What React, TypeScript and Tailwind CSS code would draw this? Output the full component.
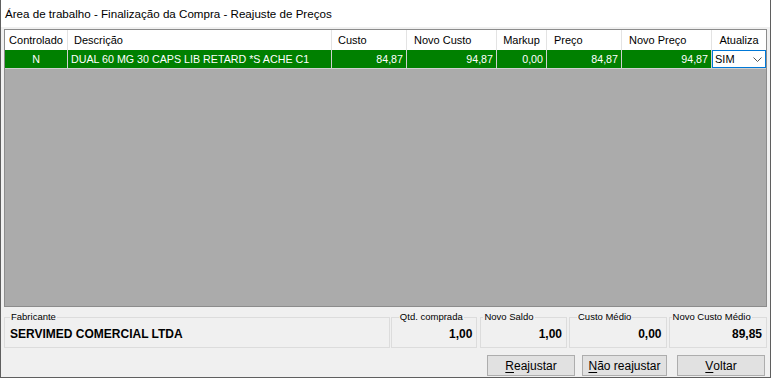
const columns = [
  { label: 'Controlado', w: 'w-[63px]', head: 'justify-center', cell: 'justify-center' },
  { label: 'Descrição', w: 'w-[264px]', head: 'justify-start pl-[6px]', cell: 'justify-start pl-[3px]' },
  { label: 'Custo', w: 'w-[75px]', head: 'justify-start pl-[6px]', cell: 'justify-end pr-[3px]' },
  { label: 'Novo Custo', w: 'w-[90px]', head: 'justify-start pl-[7px]', cell: 'justify-end pr-[3px]' },
  { label: 'Markup', w: 'w-[50px]', head: 'justify-center', cell: 'justify-end pr-[3px]' },
  { label: 'Preço', w: 'w-[75px]', head: 'justify-start pl-[7px]', cell: 'justify-end pr-[3px]' },
  { label: 'Novo Preço', w: 'w-[90px]', head: 'justify-start pl-[7px]', cell: 'justify-end pr-[3px]' },
];

const row = ['N', 'DUAL 60 MG 30 CAPS LIB RETARD *S ACHE C1', '84,87', '94,87', '0,00', '84,87', '94,87'];

const totals = [
  { label: 'Qtd. comprada', value: '1,00', w: 'w-[87px]', pl: 'pl-[7px]' },
  { label: 'Novo Saldo', value: '1,00', w: 'w-[87px]', pl: 'pl-[2px]' },
  { label: 'Custo Médio', value: '0,00', w: 'w-[98px]', pl: 'pl-[7px]' },
  { label: 'Novo Custo Médio', value: '89,85', w: 'w-[99px]', pl: 'pl-[2px]' },
];

function Button({ first, rest, w }: { first: string; rest: string; w: string }) {
  return (
    <button
      className={`${w} h-[21px] bg-[#e1e1e1] border border-[#adadad] text-[12px] text-black flex items-center justify-center`}
    >
      <span className="underline underline-offset-2">{first}</span>
      {rest}
    </button>
  );
}

export default function App() {
  return (
    <div className="w-[771px] h-[378px] flex flex-col bg-[#f0f0f0] border-x border-b border-[#5f5f5f] font-['Liberation_Sans',Arial,sans-serif] text-black overflow-hidden">
      {/* Title bar */}
      <div className="h-[27px] shrink-0 bg-white flex items-center pl-[4px] text-[11.6px]">
        Área de trabalho - Finalização da Compra - Reajuste de Preços
      </div>

      <div className="flex-1 flex flex-col px-[3px] pt-[2px]">
        {/* Grid */}
        <div className="h-[278px] shrink-0 bg-[#ababab] border border-[#8c8c8c] flex flex-col">
          <div className="h-[20px] flex bg-white text-[11px]">
            {columns.map((c) => (
              <div key={c.label} className={`${c.w} flex items-center border-r border-[#e3e3e3] ${c.head}`}>
                {c.label}
              </div>
            ))}
            <div className="flex-1 flex items-center justify-center">Atualiza</div>
          </div>
          <div className="h-[19px] flex bg-[#008000] text-white text-[10.7px] border-b border-[#d0d0d0]">
            {columns.map((c, i) => (
              <div key={c.label} className={`${c.w} flex items-center border-r border-[#d0d0d0] ${c.cell}`}>
                {row[i]}
              </div>
            ))}
            <div className="flex-1 flex items-center justify-between bg-white border border-[#0078d7] text-black text-[11px] pl-[2px] pr-[3px]">
              <span>SIM</span>
              <svg width="9" height="5" viewBox="0 0 9 5" fill="none" stroke="#555" strokeWidth="1">
                <path d="M0.5 0.5 L4.5 4.5 L8.5 0.5" />
              </svg>
            </div>
          </div>
        </div>

        {/* Totals */}
        <div className="flex items-start mt-[5px] h-[36px] shrink-0">
          <fieldset className="w-[388px] h-[36px] border border-[#dcdcdc] pl-[5px] mr-[1px]">
            <legend className="text-[9.5px] leading-[10px] px-[1px]">Fabricante</legend>
            <div className="text-[12px] font-bold pt-[3px]">SERVIMED COMERCIAL LTDA</div>
          </fieldset>
          {totals.map((t, i) => (
            <fieldset
              key={t.label}
              className={`${t.w} h-[36px] border border-[#dcdcdc] ${t.pl} pr-[4px] ${i === 0 ? 'ml-0' : i === 1 ? 'ml-[3px]' : 'ml-[2px]'}`}
            >
              <legend className="text-[9.5px] leading-[10px] px-[1px]">{t.label}</legend>
              <div className="text-[12px] font-bold text-right pt-[3px]">{t.value}</div>
            </fieldset>
          ))}
        </div>

        {/* Buttons */}
        <div className="flex justify-end mt-[7px] pr-[2px]">
          <Button first="R" rest="eajustar" w="w-[88px]" />
          <div className="w-[7px]" />
          <Button first="N" rest="ão reajustar" w="w-[85px]" />
          <div className="w-[10px]" />
          <Button first="V" rest="oltar" w="w-[88px]" />
        </div>
      </div>
    </div>
  );
}
